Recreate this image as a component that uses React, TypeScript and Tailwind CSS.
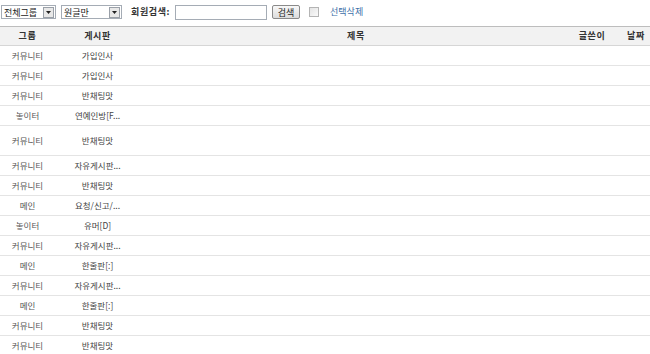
import React from 'react';

const rows: { group: string; board: string; tall?: boolean }[] = [
  { group: '커뮤니티', board: '가입인사' },
  { group: '커뮤니티', board: '가입인사' },
  { group: '커뮤니티', board: '반채팅맛' },
  { group: '놓이터', board: '연예인방[F...' },
  { group: '커뮤니티', board: '반채팅맛', tall: true },
  { group: '커뮤니티', board: '자유게시판...' },
  { group: '커뮤니티', board: '반채팅맛' },
  { group: '메인', board: '요청/신고/...' },
  { group: '놓이터', board: '유머[D]' },
  { group: '커뮤니티', board: '자유게시판...' },
  { group: '메인', board: '한줄판[:]' },
  { group: '커뮤니티', board: '자유게시판...' },
  { group: '메인', board: '한줄판[:]' },
  { group: '커뮤니티', board: '반채팅맛' },
  { group: '커뮤니티', board: '반채팅맛' },
];

function FakeSelect({ label, width }: { label: string; width: string }) {
  return (
    <div className={`flex items-center h-[14px] border border-[#a5acb5] bg-white ${width}`}>
      <span className="flex-1 pl-[2px] text-[9px] leading-none text-[#222]">{label}</span>
      <span className="flex items-center justify-center w-[11px] h-[11px] mr-[1px] border border-[#9aa0a8] bg-[#e8e8e8]">
        <svg width="5" height="3" viewBox="0 0 5 3">
          <path d="M0 0h5L2.5 3z" fill="#222" />
        </svg>
      </span>
    </div>
  );
}

export default function App() {
  return (
    <div
      className="w-[650px] h-[354px] overflow-hidden bg-white text-[#555]"
      style={{ fontFamily: '"Noto Sans CJK KR", "Noto Sans", sans-serif' }}
    >
      {/* Toolbar */}
      <div className="flex items-center h-[26px] pl-[1px] pb-[2px]">
        <FakeSelect label="전체그룹" width="w-[55px]" />
        <div className="w-[5px]" />
        <FakeSelect label="원글만" width="w-[61px]" />
        <span className="ml-[9px] text-[9px] font-bold text-[#333] tracking-[0.6px]">회원검색:</span>
        <div className="ml-[5px] w-[92px] h-[15px] border border-[#a5acb5] bg-white" />
        <button className="ml-[5px] h-[14px] w-[28px] rounded-[2px] border border-[#8a8a8a] bg-gradient-to-b from-[#f8f8f8] to-[#dcdcdc] text-[9px] leading-none text-[#222]">
          검색
        </button>
        <div className="ml-[9px] w-[10px] h-[10px] border border-[#b4b4b4] bg-gradient-to-br from-[#e4e4e4] to-[#fafafa]" />
        <a className="ml-[11px] text-[9px] text-[#3d6fa8]">선택삭제</a>
      </div>

      {/* Table */}
      <div className="w-[660px]">
        <div className="grid grid-cols-[55px_85px_432px_40px_48px] h-[20px] items-center bg-[#f2f2f2] border-t border-t-[#bdbdbd] border-b border-b-[#d6d6d6] text-[9px] font-bold text-[#333] tracking-[0.6px] text-center">
          <span>그룹</span>
          <span>게시판</span>
          <span>제목</span>
          <span>글쓴이</span>
          <span>날짜</span>
        </div>
        {rows.map((r, i) => (
          <div
            key={i}
            className={`grid grid-cols-[55px_85px_432px_40px_48px] items-center border-b border-b-[#e4e4e4] text-[8.5px] text-center ${
              r.tall ? 'h-[30px]' : 'h-[20px]'
            }`}
          >
            <span>{r.group}</span>
            <span className="text-[#444]">{r.board}</span>
            <span />
            <span />
            <span />
          </div>
        ))}
      </div>
    </div>
  );
}
